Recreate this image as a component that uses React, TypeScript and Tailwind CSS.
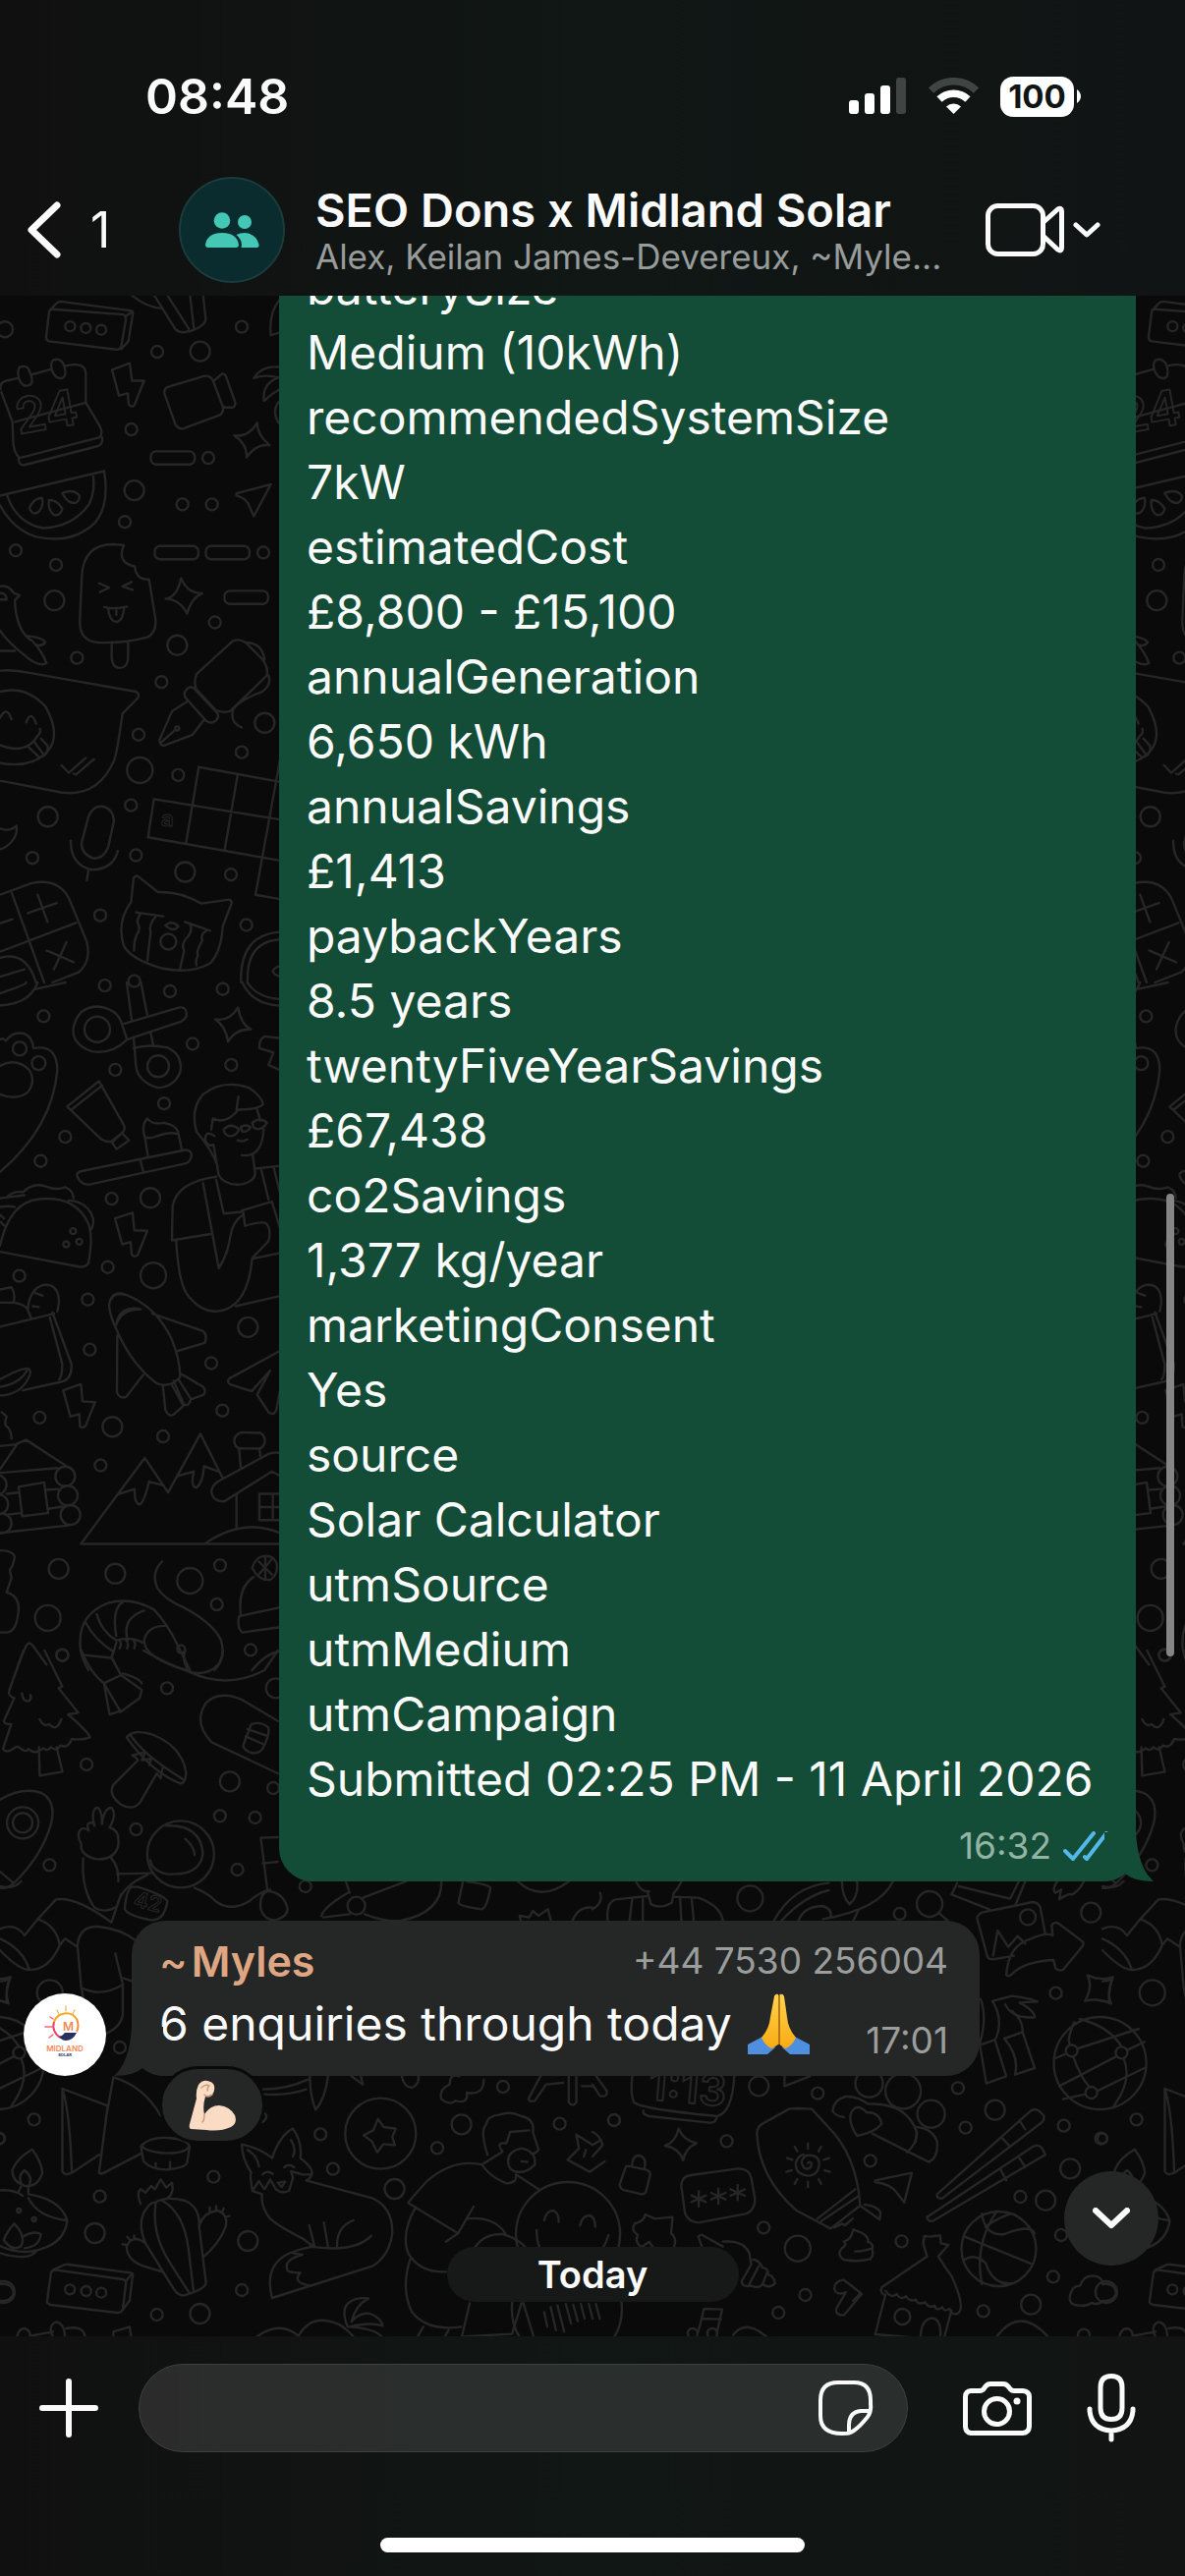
import React from 'react';

type Scene = {
  transform: string;
  sx: number;
  sy: number;
  paths: string;
  circles: number[][];
};

const submission = [
  'batterySize',
  'Medium (10kWh)',
  'recommendedSystemSize',
  '7kW',
  'estimatedCost',
  '£8,800 - £15,100',
  'annualGeneration',
  '6,650 kWh',
  'annualSavings',
  '£1,413',
  'paybackYears',
  '8.5 years',
  'twentyFiveYearSavings',
  '£67,438',
  'co2Savings',
  '1,377 kg/year',
  'marketingConsent',
  'Yes',
  'source',
  'Solar Calculator',
  'utmSource',
  'utmMedium',
  'utmCampaign',
  'Submitted 02:25 PM - 11 April 2026',
];

// Wallpaper doodles. Circles are [cx, cy, radius], radius in wallpaper units.
const scenes: Scene[] = [
  {
    // calendar, melon, popsicle, pen, cat
    transform: 'translate(0 300) scale(.33333 .44643)',
    sx: 3,
    sy: 2.24,
    paths: `M160 33L375 45Q385 46 384 58L370 118Q366 126 355 125L150 106Q140 104 141 95L150 40Q152 32 160 33M152 36L172 20Q178 15 190 16L398 36Q408 38 405 46L392 106L370 124M405 38L382 50
      M400 0Q450 30 495 31M470 0L535 78Q550 90 575 83M510 0L577 78M580 0L592 78M620 0L628 55Q628 72 577 84M855 10Q820 40 827 92L855 86
      M2 215Q-2 200 20 196L55 190M98 182L155 170M200 162Q262 152 262 180L262 246L305 300Q315 315 305 325L60 372Q40 360 40 330L38 290L4 222M46 290L262 246M312 325Q315 340 300 345L75 388Q58 390 56 374
      M60 165Q85 158 92 178Q105 200 90 206Q70 212 60 195Q50 175 60 165ZM162 149Q185 142 195 160Q205 182 193 189Q175 195 162 178Q150 158 162 149Z
      M342 171L396 156L403 196L440 196L410 252Q403 258 393 250L390 225L363 230Z
      M502 225Q500 215 510 211L620 186Q640 182 650 195L680 255Q684 268 672 274L560 305Q545 308 535 295ZM655 195L678 180Q686 180 690 186L718 245Q720 255 710 257L688 257Q682 257 678 250L655 205
      M855 165Q800 160 775 190Q810 180 855 190M855 188Q800 200 806 242Q830 225 855 215M850 245Q830 265 850 292
      M785 292Q785 320 823 343Q780 340 753 371Q755 340 715 321Q760 325 785 292Z
      M475 357H580Q595 359 595 372Q595 385 580 387H475Q460 385 460 372Q460 359 475 357ZM487 573H591Q606 575 606 588Q606 601 591 603H487Q472 601 472 588Q472 575 487 573ZM643 573H747Q762 575 762 588Q762 601 747 603H643Q628 601 628 588Q628 575 643 573ZM700 675H804Q819 677 819 690Q819 703 804 705H700Q685 703 685 690Q685 677 700 675Z
      M722 453L827 432L775 505L763 485Q755 465 722 458Z
      M0 458L318 402Q335 480 290 520Q220 570 110 552Q40 535 0 480M22 458Q50 520 130 532Q220 530 270 480Q292 450 284 408M90 487Q100 465 128 463Q135 480 118 495Q100 505 90 487ZM150 468Q145 490 165 502Q185 505 190 488Q175 468 150 468ZM190 452Q205 475 228 475Q245 470 242 458Q225 442 190 452Z
      M250 640Q255 570 345 569L378 571Q355 610 412 620Q415 650 455 649L475 740Q478 770 450 781Q380 795 300 793Q240 790 244 740ZM341 793V830Q345 851 366 851Q388 850 391 830V790M303 658L333 668L305 678M402 655L374 665L405 673M318 712Q350 718 388 711M330 715Q335 745 355 746Q375 745 379 714M355 718V730
      M553 646Q570 680 617 681Q585 690 571 727Q550 695 506 693Q540 690 553 646Z
      M0 665Q25 660 42 680L60 685L45 697Q50 770 100 790Q130 815 142 840Q120 850 80 825Q20 790 0 765M0 680Q20 680 20 695L0 695M85 778Q125 780 138 792Q130 803 108 798M0 812H45
      M0 857Q40 854 90 862L415 905Q428 910 420 920L374 955Q355 1055 348 1062Q300 1145 190 1135L0 1108M0 905Q80 890 140 940Q190 1010 140 1045Q90 1080 0 1068M0 965Q20 935 35 968M80 975Q95 945 110 978M0 1027Q80 1050 115 1005Q125 1000 122 990M88 1032L120 1055Q150 1050 145 1028L125 1012M105 1020L130 1045M188 1073L210 1090L262 1056M225 1092L232 1094L287 1059
      M600 865L710 790Q730 783 750 793L800 830Q820 850 815 868L705 948Q690 955 660 948L600 900Q590 885 600 865ZM755 793Q800 795 808 832M820 868Q830 890 800 905Q730 925 712 945Q700 975 738 987M565 905Q575 890 592 897L665 955Q670 968 650 975Q635 977 625 968L568 920Q560 912 565 905ZM573 927L525 950L487 1015Q488 1030 505 1027L588 1003L622 970M490 1022L535 992
      M607 1077L850 1110M470 1150L850 1196M452 1237L855 1290M607 1077L568 1250M725 1097L686 1265M855 1060L780 1368L855 1378M470 1150L452 1237
      M270 1190Q285 1163 315 1167Q345 1172 348 1200L330 1260Q315 1287 285 1285Q248 1275 249 1250ZM216 1245Q215 1300 280 1311Q345 1310 360 1268M270 1312L265 1335M0 1217Q30 1225 50 1211Q55 1230 35 1247Q15 1263 0 1264
      M0 1368L95 1342Q175 1328 210 1375L265 1475Q280 1520 240 1545L160 1568M36 1364L135 1568M0 1498L232 1432M0 1433L38 1424M85 1410L173 1387M115 1368L145 1430M142 1495L225 1522M203 1476L165 1538M0 1512Q80 1495 110 1568M0 1555L75 1538
      M408 1330Q415 1322 425 1328L482 1362Q550 1360 615 1388L700 1379Q710 1382 706 1390L680 1440Q675 1500 640 1525Q580 1550 490 1535Q400 1515 378 1485Q355 1430 400 1385ZM415 1408L498 1417M565 1430L642 1450M430 1410q-15 15-8 25q8 12-5 25q-8 15-8 35M475 1418q-22 20-15 35q-5 30-10 65M580 1435q10 15-8 30q-20 15-10 30q-5 20-12 40M630 1450q-20 10-12 22q-20 25-14 35q-8 10-4 22M505 1438Q525 1425 545 1440Q530 1455 505 1438
      M855 1453Q730 1460 736 1568M855 1470Q750 1475 756 1568M855 1530q-20 5-22 12q5 10 22 12`,
    circles: [
      [15, 79, 8], [214, 72, 5], [262, 76, 5], [309, 80, 5], [738, 73, 6], [480, 130, 6], [611, 129, 10], [401, 307, 6],
      [636, 372, 6], [410, 446, 10], [557, 478, 6], [647, 478, 6], [381, 518, 6], [48, 583, 6], [171, 616, 6], [804, 588, 6],
      [166, 697, 10], [656, 747, 6], [541, 799, 10], [235, 828, 6], [493, 883, 6], [423, 1003, 6], [427, 1084, 13], [544, 1095, 6],
      [808, 976, 10], [738, 1043, 6], [400, 1164, 6], [146, 1190, 10], [99, 1284, 6], [415, 1278, 6], [565, 1316, 10],
      [705, 1322, 6], [306, 1415, 6], [752, 1437, 6], [514, 1475, 8], [410, 1565, 6], [541, 989, 2],
    ],
  },
  {
    // scissors, person, rocket, mountains, shrimp
    transform: 'translate(0 1000) scale(.33333 .44643)',
    sx: 3,
    sy: 2.24,
    paths: `M0 25Q80 5 80 0M0 52Q90 50 115 0M110 15L200 0
      M388 130Q340 165 280 157Q215 140 225 100Q240 55 300 55Q355 60 370 90ZM375 95L548 57Q570 55 570 75Q565 85 550 90L388 130M387 0L402 85M430 0L450 75M408 150Q450 140 510 148Q560 165 550 205Q530 240 480 240Q420 225 415 190L408 125M460 115L468 143
      M740 0Q770 50 855 53M755 0Q785 35 855 38M727 57Q735 95 766 107Q720 105 696 135Q690 100 657 84Q700 90 727 57ZM855 127L808 123Q790 130 792 150L835 160L820 188L855 200
      M0 130Q10 125 18 133Q40 110 75 117Q100 125 102 150Q175 140 175 200Q160 330 0 432M0 190Q50 170 90 200Q110 225 85 250Q50 270 0 255
      M205 283L302 225L378 325Q385 335 370 345L340 362Q325 365 310 358ZM218 290L312 235M342 365L372 343L394 360L356 380Z
      M235 440Q235 432 250 430L565 382Q590 383 583 400Q578 410 565 413L270 461Q245 462 235 440ZM428 405L438 432M452 398L443 355Q430 325 450 310Q465 325 500 320Q540 325 545 345L555 380M443 352Q455 358 480 350Q520 340 540 345
      M0 600Q30 500 120 494Q230 485 270 550Q285 580 270 640Q260 650 240 648L0 614M20 490Q40 475 70 478Q100 455 140 465Q170 475 200 467Q225 475 224 492M210 497Q270 500 285 540Q285 560 275 565M0 492L75 485M0 512Q30 508 45 512M0 530l12 8m-10 8l10 8
      M351 538L405 525L410 565L450 566L420 622Q410 628 402 620L399 592L373 597Z
      M665 420Q650 385 600 340Q580 290 620 255Q680 220 760 240Q800 260 803 278Q790 290 728 290Q690 325 650 310L645 335M728 260L722 290M655 350Q625 335 627 360Q635 375 652 370L668 440Q690 465 740 460Q785 450 778 430L772 395M785 290L795 315M738 394Q800 400 805 335M683 335Q705 318 730 335Q720 352 700 350Q685 348 683 335ZM735 330Q750 322 765 330Q755 342 740 340ZM770 320Q795 305 815 320Q800 340 775 332ZM725 360Q740 365 755 358
      M660 443Q540 455 527 510L525 588L648 573M620 458L668 652Q695 620 703 580Q710 545 742 530M660 450L683 527L738 523M538 590Q545 680 570 710Q610 750 660 750Q755 745 770 630L855 617M775 425L855 418M798 428L820 495M835 420L855 480M738 520L830 500L855 560M742 520L748 555Q790 545 810 548Q830 560 820 590L770 628M720 738L855 715
      M333 735Q340 700 385 712Q480 740 525 815Q550 860 550 900Q520 925 480 915Q400 870 355 790Q335 760 333 735ZM355 780Q365 735 430 745Q375 745 358 775M340 722Q350 705 380 712M465 755L620 795Q635 805 625 822L543 840M358 805L357 935Q365 950 385 945L437 895M497 918L505 975Q515 992 530 985L560 965L523 915M530 908L560 960Q575 970 583 950L545 905M555 893L620 922Q630 930 622 940L585 950
      M0 785L165 755M160 752L218 870Q220 905 190 910L70 930M150 757L190 870Q190 900 180 905M85 745Q90 700 130 690Q180 685 180 730L175 750M82 742L95 765M108 708L130 714M100 738L118 740M0 700L35 695Q50 715 40 730L0 730M40 730Q70 732 85 745M0 905Q60 880 85 880Q100 885 85 905Q60 940 0 942M0 922Q60 915 82 885
      M193 930L247 916L252 955L290 957L262 1010Q252 1018 244 1012L242 984L215 990Z
      M855 840L700 903Q690 912 705 917L768 932L825 885L785 940L820 980Q840 990 845 970L855 930
      M5 980Q15 985 20 990Q10 1010 25 1015Q35 1025 35 1040M0 1057L52 1053L0 1110M50 1052L80 1043L205 1104M0 1118L175 1107M0 1255L210 1238M20 1166L55 1163M25 1213L65 1210M140 1157L178 1155M148 1200L190 1195M57 1150L135 1140L147 1210L68 1217Z
      M247 1280L442 1084L513 1163L612 1029L680 1130M247 1280H855M360 1167L411 1155Q410 1190 427 1190Q440 1185 455 1138L500 1147M543 1125L592 1115Q580 1150 600 1152Q620 1140 623 1103L668 1115M645 1160Q650 1145 665 1138L820 1075Q840 1070 855 1073M645 1160Q650 1185 685 1183L830 1115L855 1125M722 1165V1245M625 1280Q740 1220 855 1255M735 1105L730 1063Q712 1055 716 1040Q725 1025 745 1026L795 1027Q812 1035 808 1050Q800 1065 785 1063L732 1062M793 1065L795 1080M855 1166H792V1226H855M833 1168V1226M792 1196H855
      M0 1295Q40 1295 45 1310L38 1330l-8 10l5 18L20 1390Q65 1400 55 1440Q50 1480 20 1482H0
      M270 1568Q240 1530 245 1500Q245 1440 330 1415Q400 1400 470 1430Q510 1460 545 1515L580 1568M262 1460Q290 1500 345 1525M295 1440Q310 1480 355 1500M355 1490Q340 1430 375 1412M390 1500Q370 1450 440 1432M440 1500Q450 1465 510 1467M440 1500Q440 1540 570 1568M250 1533L340 1540Q350 1520 355 1505M340 1540L362 1568M365 1500q8 8 0 18M385 1500q10 8 3 18M405 1498q12 8 5 20M355 1500Q400 1490 435 1505
      M495 1320Q460 1345 480 1380Q500 1405 560 1425Q650 1460 675 1500Q690 1540 655 1568
      M775 1355Q725 1380 735 1440M855 1425L730 1445Q722 1470 740 1482L855 1470M770 1335Q780 1310 805 1308Q835 1305 845 1325Q850 1350 825 1362Q790 1365 770 1335ZM790 1320L830 1350M830 1315L790 1350M810 1308V1360
      M56 1555L78 1515Q88 1500 100 1512L142 1555M770 1568Q810 1530 855 1525`,
    circles: [
      [320, 7, 6], [519, 20, 6], [680, 15, 6], [133, 77, 6], [588, 140, 6], [352, 199, 6], [706, 188, 6], [501, 276, 6],
      [199, 352, 6], [124, 407, 6], [341, 493, 6], [459, 491, 10], [329, 649, 6], [468, 668, 13], [59, 669, 6], [268, 723, 6],
      [274, 837, 6], [757, 786, 10], [645, 868, 6], [121, 992, 6], [343, 1013, 10], [498, 1035, 6], [679, 976, 6], [307, 1101, 6],
      [179, 1337, 10], [352, 1348, 10], [580, 1364, 13], [672, 1329, 6], [146, 1449, 13], [662, 1418, 6], [190, 1533, 6],
      [765, 1522, 6], [60, 151, 7], [118, 184, 7], [483, 191, 11], [297, 107, 13], [223, 567, 3], [202, 597, 3], [242, 591, 3],
      [199, 1126, 10], [207, 1170, 10], [215, 1214, 10], [-10, 1145, 10], [-5, 1190, 10], [5, 1233, 10], [553, 1520, 4],
    ],
  },
  {
    // tree, mushroom, astronaut
    transform: 'translate(0 1680) scale(.38462 .33333)',
    sx: 2.6,
    sy: 3,
    paths: `M62 0L25 120Q20 140 38 145L10 215Q10 225 30 225L8 300Q15 315 35 300Q45 290 50 295Q70 315 75 300Q90 320 115 298Q125 310 135 295Q150 310 160 290Q180 300 190 270Q215 275 238 265Q235 250 180 195L207 190L155 115L165 110L118 0M103 295L105 382L165 370L150 295M58 130Q60 155 75 155Q85 150 80 135M105 210Q115 235 130 225Q150 250 162 210
      M215 0Q240 70 275 100L290 195L318 185L275 100L320 75L375 120L370 145L318 188M320 75L295 20M325 70Q370 85 375 100M380 0Q440 40 500 65Q480 30 490 0M500 65Q600 120 700 60L735 0M500 65Q550 80 580 40Q590 20 590 0
      M735 215L640 150Q580 120 545 160Q510 220 560 280L735 375M665 225Q690 215 710 235Q715 255 695 300Q680 320 660 310Q640 300 645 285ZM655 240L705 260M650 262L695 285
      M335 265Q350 240 400 255Q480 290 492 370Q492 410 475 405Q400 370 335 265ZM345 258Q380 320 487 395M350 320Q360 325 365 335L300 410Q285 440 320 470Q350 490 370 465L410 385L415 375L425 390L430 360M350 320L385 310L375 335L400 330L395 350
      M0 455Q60 415 110 435Q150 460 135 530Q110 630 35 712Q20 728 0 725M0 675L35 710
      M215 590Q200 560 215 545Q225 540 235 550Q225 525 245 525L250 535Q240 490 255 480Q270 480 270 530Q275 480 295 480Q310 500 290 540Q320 550 312 600Q300 640 255 637Q210 625 215 590M220 635Q215 730 250 785Q280 805 310 780Q320 720 390 685M293 632Q315 660 313 705M310 682L400 680M515 725Q550 740 570 765Q610 800 660 765Q690 735 715 730M440 535Q530 530 537 620Q530 690 440 682Q400 670 398 640M490 575Q515 600 515 625
      M350 722Q335 725 330 790Q340 810 400 823Q435 825 443 765Q430 745 365 722ZM735 570L690 572L708 735Q685 745 690 790Q700 825 730 823Q765 810 760 785Q750 740 710 735M695 650L735 645
      M100 820L148 760Q200 750 295 830L320 745M0 850Q40 830 65 870L100 820Q150 840 158 900L172 880L205 905M0 880Q60 910 78 975M158 900Q130 975 78 975Q50 975 0 915
      M205 900Q210 840 260 843Q320 850 358 885M205 900L215 1030Q270 1060 325 1020Q310 950 305 925M325 1000L350 1010M215 1030L225 1085M325 1020V1110Q320 1150 280 1170M0 1010Q15 1010 27 1000Q15 1040 18 1075Q10 1070 0 1070
      M915 705L925 740M850 810Q860 780 920 740M855 815L925 805M960 755L1075 705M965 805Q1020 830 1060 825Q1170 800 1168 705M1225 705L1213 770Q1215 780 1275 790Q1288 785 1298 725Q1295 715 1235 705M1370 705Q1430 770 1505 705M1378 825L1375 810L1400 815L1410 795L1425 810L1450 790L1458 825M1515 825Q1530 780 1568 785
      M695 1340Q760 1340 815 1310M695 1355Q760 1360 810 1340M820 1300Q820 1360 835 1402Q860 1370 868 1300M930 1300L960 1325L955 1300M1063 1300Q1070 1335 1090 1335Q1110 1325 1107 1300M1215 1300Q1190 1290 1190 1325Q1160 1340 1168 1370Q1190 1390 1205 1375Q1240 1385 1235 1350Q1280 1360 1280 1310M1430 1300L1400 1365Q1395 1380 1415 1375L1445 1325L1490 1320M1505 1300V1380Q1515 1395 1525 1380V1300M1540 1330H1568M695 1410Q715 1420 695 1440`,
    circles: [
      [165, 15, 6], [442, 115, 6], [229, 348, 6], [608, 400, 10], [723, 420, 6], [582, 505, 6], [675, 510, 6], [360, 546, 6],
      [131, 655, 6], [628, 669, 6], [317, 1212, 6], [808, 720, 6], [943, 779, 9], [730, 115, 10], [1331, 1332, 6],
      [60, 526, 16], [60, 526, 10], [478, 622, 34], [132, 1045, 13],
    ],
  },
  {
    // lamp, book, cactus, fox, hugging man
    transform: 'translate(0 2150) scale(.38462 .33333)',
    sx: 2.6,
    sy: 3,
    paths: `M1000 20L1015 45Q1045 50 1047 50L1038 75L1045 100L1015 97L998 122L985 90L962 70L988 55Z
      M85 113Q110 150 112 185Q100 230 65 225Q30 210 33 175Q45 140 85 113ZM65 177Q90 200 75 225M65 177Q45 195 58 220M55 228L48 245M0 238Q40 235 60 255M75 228V250Q160 265 178 330Q170 410 80 425Q40 430 0 408M75 262Q100 320 175 330M0 430Q60 450 85 435L100 420M38 340Q70 380 55 410Q30 425 10 390Q20 360 38 340ZM60 380Q90 360 108 372Q105 410 65 415
      M165 -72L285 -20L262 185Q265 190 275 185L375 125M165 -72V180Q170 195 190 185L262 130M165 -72Q185 0 190 185M300 -107L280 20M300 -107Q380 -80 425 10
      M375 100Q400 75 440 78Q490 80 500 100Q500 125 440 125Q380 120 375 100ZM373 105L380 150Q400 175 440 175Q490 170 495 155L502 105M412 155V170M450 152V170
      M372 280Q360 245 372 235L385 245L400 225L410 235L425 205L440 230L455 215Q462 250 440 265M410 275Q440 255 490 270Q530 290 527 350L545 520Q545 540 485 560Q470 558 460 540L385 400Q360 330 390 290Q400 275 410 275ZM412 280Q400 370 450 460L500 550M430 270Q490 310 500 430L512 545M527 345Q540 305 575 300Q605 310 597 350Q580 400 540 440M385 400Q350 370 335 410Q335 450 380 470L430 487M555 302v-12M572 298v-12M587 305l5-12M595 320l12-3M338 405l-14-2M345 392l-8-12M355 388v-12
      M640 98Q690 110 720 140Q740 70 775 50Q800 90 795 140Q830 170 825 190Q820 205 810 208L985 262Q1040 290 1038 370Q1030 440 985 470L720 567Q700 480 750 440Q780 420 830 410L800 385Q740 350 715 325Q690 290 693 250L668 240Q660 190 665 185Q640 140 640 98ZM655 115Q680 130 685 165M770 85Q785 110 775 135M695 190Q705 175 722 188M752 168Q765 155 778 168M668 240L685 210L700 235L715 205L730 235Q745 250 765 240L775 200L770 180L800 190L820 190M735 215L755 212L745 228ZM818 345L832 408M857 337L868 410M935 330Q890 350 892 410M820 410Q940 430 982 377M775 430L800 435Q750 450 760 480Q760 490 795 490Q770 520 825 530
      M135 490Q138 480 150 482L325 510Q335 512 333 525L325 600Q322 613 310 612L135 588Q122 585 125 573ZM140 482L162 470Q170 463 182 465L345 490Q353 492 351 500L343 575L320 610M350 492L333 515
      M1275 160Q1200 140 1130 210Q1090 260 1080 277L1212 370L1253 288M1100 290Q1060 370 1080 430Q1110 490 1180 487M1085 450Q1060 540 1090 610Q1130 670 1220 655M1275 160Q1300 200 1340 217Q1370 215 1365 190L1425 235M1290 130Q1270 60 1285 40Q1290 10 1320 8Q1350 -5 1380 12Q1415 20 1410 60L1425 115Q1415 130 1405 125M1275 160L1330 120Q1310 90 1340 95L1350 60L1400 55M1345 155Q1340 120 1380 110Q1420 120 1415 160Q1390 190 1360 180Q1345 170 1345 155ZM1380 150L1395 152M1212 370L1180 395M1235 325Q1310 315 1340 375M1255 415Q1280 370 1330 372Q1370 385 1390 412
      M1440 330Q1445 300 1465 300Q1480 310 1478 335M1535 345Q1540 315 1560 315Q1575 320 1575 350M1420 360Q1420 460 1503 480Q1590 460 1610 375M1243 583L1222 685L1355 677L1380 583M1385 583L1412 685M1120 655L1105 685M1187 665L1177 685M1440 610l8 45M1457 595l14 70M1475 590l18 80M1497 585l14 60M1517 588l12 50M1537 585l10 45M1558 585l10 45M1577 585l10 45
      M920 655Q900 600 925 580Q940 565 975 568Q940 590 930 640Q950 610 980 615Q1010 630 1013 652Q980 640 925 655M925 655Q990 660 1010 685M680 685Q740 635 790 683Q820 620 880 640Q910 650 935 685
      M45 685Q50 660 65 660Q80 665 80 683L140 670M140 685Q125 650 150 640Q170 645 172 685M175 660Q220 650 225 685M300 685V670L343 655L347 685M1600 150L1560 182L1502 145L1532 110L1525 68L1568 100L1590 85M1550 115L1545 135`,
    circles: [
      [90, 22, 6], [848, 67, 6], [1221, 37, 10], [1481, 35, 6], [1157, 109, 6], [881, 173, 6], [1044, 234, 10], [565, 197, 6],
      [264, 257, 6], [251, 369, 10], [656, 393, 10], [640, 543, 6], [415, 618, 6], [529, 615, 10], [10, 549, 11], [185, 541, 5],
      [228, 546, 5], [268, 551, 5], [50, 300, 2], [90, 327, 2], [0, 80, 5], [1007, 65, 36], [1503, 372, 53], [1500, 600, 56],
    ],
  },
  {
    // portrait, picture, arrow, globe
    transform: 'translate(603 1780) scale(.38462 .33333)',
    sx: 2.6,
    sy: 3,
    paths: `M115 405Q130 440 150 435M235 405Q225 430 215 440L210 470Q180 490 155 475L145 435M40 525Q35 470 60 460L145 450M215 452L280 455Q340 480 345 525M105 458L98 525M133 458V525M232 455L235 525M262 455L268 525M0 490Q30 470 20 440M480 525Q530 420 625 410M500 525Q560 450 625 432M545 525Q560 480 610 480Q635 490 630 515M660 405Q660 450 680 475Q705 450 700 405M795 405Q760 490 610 520M705 490L690 525
      M915 500L940 525M965 410L950 445L1050 490M970 420L1105 458L1128 405M1145 405L1120 475M1230 405Q1215 430 1225 440L1240 430L1235 460Q1260 440 1270 445Q1290 430 1300 405M1350 420Q1385 430 1405 405
      M1198 565L1185 485Q1180 470 1165 468L1030 500Q1015 510 1018 520L1045 635Q1050 645 1065 642L1115 632M1060 632L1072 555L1100 605L1125 572L1145 595
      M1095 690Q1100 600 1160 580Q1200 560 1218 570L1215 540Q1220 525 1235 535L1298 590Q1300 600 1295 605L1245 675Q1235 680 1225 670L1220 645Q1140 650 1108 690Q1098 698 1095 690
      M1310 692Q1345 710 1377 697Q1360 740 1372 778Q1335 760 1303 770Q1325 730 1310 692Z
      M1027 765Q1045 820 1025 900M1060 770L1110 755Q1150 760 1177 772L1130 775Q1170 800 1170 820Q1110 825 1092 780M1058 770Q1090 830 1065 890L1095 1000L1042 1022L1025 905L1062 890M1110 800Q1140 830 1138 865L1090 885Q1130 940 1118 995L1170 975L1138 865
      M1275 835Q1250 900 1268 905M1272 940Q1290 1000 1315 1033M1400 910Q1370 850 1290 825M1405 945Q1430 1010 1380 1090M1225 945L1252 932M1285 915L1445 855M1235 1030L1385 940M1415 920L1460 895M1245 1070L1305 1055M1335 1045L1460 975
      M105 1000Q100 1060 110 1080Q130 1100 330 1122Q370 1110 375 1000M135 1105Q130 1115 150 1122L310 1142Q325 1143 328 1128M508 1000V1030L575 1000M0 1025L20 1060Q40 1065 38 1045L10 1000
      M635 1105Q640 1070 670 1062Q700 1060 730 1085Q830 1080 858 1170L855 1200M635 1105Q640 1120 665 1125M700 1182Q675 1140 685 1110Q700 1080 725 1110Q760 1110 765 1145Q750 1170 700 1182`,
    circles: [
      [417, 457, 13], [813, 504, 6], [892, 474, 13], [1319, 500, 10], [1226, 746, 6], [440, 1030, 10], [596, 1052, 6],
      [967, 1036, 6], [732, 1022, 14], [822, 1045, 18], [896, 1115, 14], [1065, 1103, 10], [987, 1157, 6], [1247, 1151, 6],
      [57, 1134, 6], [1152, 514, 8], [1343, 960, 47], [1268, 922, 6], [1400, 928, 6], [1320, 1050, 6],
    ],
  },
  {
    // padlock, bottle, chopsticks, basketball, hut
    transform: 'translate(603 2150) scale(.38462 .33333)',
    sx: 2.6,
    sy: 3,
    paths: `M228 50Q240 85 275 95Q245 110 240 147Q230 110 192 102Q220 90 228 50ZM88 167L72 220Q72 235 85 238L130 250Q140 250 142 240L153 190Q152 178 140 175L100 165Q90 163 88 167ZM105 165Q105 130 125 132Q145 140 137 172
      M235 225Q235 195 260 192L385 172Q415 172 420 200L430 265Q430 300 405 310L280 337Q255 335 245 310ZM281 241v46M262 254l38 20M262 274l38-20M333 233v46M314 246l38 20M314 266l38-20M384 222v46M365 235l38 20M365 255l38-20
      M112 340Q135 335 140 312L165 325L212 320L208 370Q225 385 215 412M112 340Q100 360 120 375Q110 395 130 412L150 395L160 412M0 60Q20 70 27 100L0 135
      M520 -10L450 35Q435 45 435 65Q440 200 540 300L630 355L708 285Q700 130 620 40L580 -10L540 -12ZM595 325L695 235M605 332L705 255M640 352L660 340L668 345L688 325M708 285L760 328L762 305Q750 285 720 282
      M570 155q8-8 10 5q-5 18-20 10q-15-20 5-38q30-5 35 20q0 40-30 42q-35-5-32-40q5-20 20-25M570 95v16M570 212v16M513 182l14-5M628 182l-14-5M515 140l14 5M626 140l-14 5M535 105l7 14M605 105l-7 14M535 218l7-14M605 218l-7-14
      M740 65L890 152Q915 140 912 90Q900 50 858 45M858 60Q860 95 832 122M748 208L845 185L825 275L805 245Q790 220 748 213Z
      M912 250L1160 -5Q1175 -15 1190 5Q1200 15 1190 30L925 263Q910 265 912 250M1085 80L1105 105M1130 25L1145 52M885 320L1165 105Q1180 95 1190 110L1198 130L900 332Q888 335 885 320M1080 175L1095 208M1130 140L1145 168
      M690 358Q685 390 665 395Q675 405 660 415Q645 435 665 450Q700 458 735 448Q745 435 740 420Q745 400 728 395Q735 375 690 358M695 425Q715 425 740 415
      M290 412L280 380Q285 370 295 378L345 410M345 395Q400 390 415 430L420 465L395 515Q395 535 420 530Q440 540 450 525Q470 540 483 522Q480 500 465 495Q465 475 450 475Q440 450 425 450M440 470L415 525M462 490L450 525
      M985 380L1162 463M1070 302Q1010 400 1030 525M1030 310Q1040 380 1090 372Q1160 340 1170 370M985 450Q1010 430 1040 460Q1060 530 1110 522M1040 350Q1060 330 1105 310
      M775 558Q760 555 765 535L885 440L875 400L878 378L893 380L905 378L920 376L922 400L942 405L915 440Q930 470 950 500Q990 600 965 615Q950 620 945 600Q930 610 925 595Q910 610 905 590Q890 600 880 580Q860 590 855 572Q840 580 830 562Q815 575 805 555Q790 570 775 545M775 558L748 678L870 690M950 605L930 690M868 685Q870 630 900 628Q925 635 920 690
      M1290 590Q1255 590 1265 555Q1270 530 1290 530Q1300 495 1330 500Q1350 505 1350 525Q1385 520 1385 555Q1375 580 1350 575Q1340 590 1320 582Q1310 592 1290 590
      M640 540Q640 515 665 512L710 552L690 575M640 540Q645 560 670 550L645 600Q642 620 665 620L712 555M280 670L295 600L343 602L330 670M290 630L340 632M1070 685Q1130 590 1205 685M372 680Q400 640 440 668L460 685`,
    circles: [
      [57, 24, 6], [355, 88, 6], [453, 352, 6], [543, 416, 13], [735, 148, 6], [818, 394, 6], [563, 558, 6], [492, 612, 6],
      [1132, 258, 6], [1199, 269, 10], [1264, 172, 10], [1240, 375, 6], [1219, 502, 6], [1160, 587, 10], [1034, 607, 6],
      [1346, 80, 6], [1300, 680, 6], [820, 624, 8], [1075, 417, 38], [265, 675, 5], [317, 675, 5],
    ],
  },
];

function Wallpaper() {
  return (
    <svg
      className="absolute inset-0 h-full w-full"
      viewBox="0 301 1206 2077"
      preserveAspectRatio="xMinYMin slice"
      fill="none"
      stroke="#262626"
      strokeWidth="2.4"
      strokeLinecap="round"
      strokeLinejoin="round"
      aria-hidden="true"
    >
      <g id="doodles">
        {scenes.map((scene) => (
          <g key={scene.transform} transform={scene.transform}>
            <path d={scene.paths} vectorEffect="non-scaling-stroke" />
            {scene.circles.map(([cx, cy, r]) => (
              <ellipse key={`${cx}-${cy}-${r}`} cx={cx} cy={cy} rx={r * scene.sx} ry={r * scene.sy} vectorEffect="non-scaling-stroke" />
            ))}
          </g>
        ))}
        <g fontFamily="Inter, sans-serif" fontWeight="600" strokeWidth="2">
          <text x="19" y="442" fontSize="50" transform="rotate(-10 19 442)">24</text>
          <text x="164" y="841" fontSize="22" strokeWidth="1">a</text>
          <text x="135" y="1940" fontSize="22" strokeWidth="1" transform="rotate(14 135 1940)">42</text>
          <text x="659" y="2137" fontSize="44" transform="rotate(5 659 2137)">1:13</text>
        </g>
      </g>
      {/* the pattern repeats every 1122 units */}
      <use href="#doodles" x="1122" />
      <use href="#doodles" x="-1122" />
    </svg>
  );
}

function StatusIcons() {
  return (
    <div className="flex items-center gap-[22px]">
      <svg className="h-[38px] w-[59px]" viewBox="0 0 59 38" fill="#fff" aria-hidden="true">
        <rect x="0" y="23" width="10" height="14" rx="3" />
        <rect x="16" y="16" width="10" height="21" rx="3" />
        <rect x="32" y="8" width="10" height="29" rx="3" />
        <rect x="48" y="0" width="10" height="37" rx="3" fill="#404544" />
      </svg>
      <svg className="h-[38px] w-[51px]" viewBox="0 0 51 38" aria-hidden="true">
        <path d="M2.5 13A33 33 0 0 1 48.500 13" fill="none" stroke="#404544" strokeWidth="7.500" />
        <path d="M11 22A21 21 0 0 1 40 22" fill="none" stroke="#fff" strokeWidth="7.500" />
        <path d="M18 29.500A11 11 0 0 1 33 29.500L25.500 37Z" fill="#fff" />
      </svg>
      <div className="flex items-center gap-[3px]">
        <div className="flex h-[41px] w-[75px] items-center justify-center rounded-[13px] bg-white text-[33px] leading-none font-bold text-[#101514]">
          100
        </div>
        <svg className="h-[14px] w-1" viewBox="0 0 4 14" fill="#fff" aria-hidden="true">
          <path d="M0 0Q4 3 4 7T0 14Z" />
        </svg>
      </div>
    </div>
  );
}

function ChatHeader() {
  return (
    <header className="relative shrink-0 bg-linear-to-r from-[#101010] via-[#101715] to-[#111414] pb-[13px]">
      <div className="flex h-[138px] items-end justify-between pr-[106px] pl-[148px]">
        <time className="text-[50px] leading-[80px] font-semibold">08:48</time>
        <div className="flex h-[80px] items-center">
          <StatusIcons />
        </div>
      </div>
      <div className="mt-[42px] flex items-center pr-[86px] pl-7">
        <button type="button" aria-label="Back" className="flex w-[154px] items-center gap-[30px]">
          <svg className="h-[58px] w-[34px]" viewBox="0 0 34 58" fill="none" stroke="#fafafa" strokeWidth="7" strokeLinecap="round" strokeLinejoin="round">
            <path d="M30 4L4 29L30 54" />
          </svg>
          <span className="text-[50px] leading-[60px]">1</span>
        </button>
        <span className="flex h-27 w-27 shrink-0 items-center justify-center rounded-full border-2 border-[#1c3b3b] bg-[#0a2c2e]">
          <svg className="h-9 w-[55px]" viewBox="0 0 55 36" fill="#44c8b5" aria-hidden="true">
            <circle cx="17" cy="8.500" r="8.300" />
            <circle cx="40" cy="10" r="7" />
            <path d="M0 33Q2 21 17 21T34 33Q34 36 31 36H3Q0 36 0 33Z" />
            <path d="M31.500 23Q35 21 40 21Q52 22 54.500 33Q55 36 51 36H36.500Q38.500 29 31.500 23Z" />
          </svg>
        </span>
        <div className="min-w-0 flex-1 pt-1 pl-[31px]">
          <h1 className="text-[47px] leading-[50px] font-semibold whitespace-nowrap">SEO Dons x Midland Solar</h1>
          <p className="text-[35px] leading-[44px] whitespace-nowrap text-[#989c9b]">Alex, Keilan James-Devereux, ~Myle...</p>
        </div>
        <button type="button" aria-label="Video call" className="flex items-center gap-[9px]">
          <svg className="h-[54px] w-[80px]" viewBox="0 0 80 54" fill="none" stroke="#fafafa" strokeWidth="5" strokeLinejoin="round">
            <rect x="2.500" y="2.500" width="56" height="49" rx="10" />
            <path d="M58.500 19.500L73.500 6Q77.500 4 77.500 8V45Q77.500 49.500 73.500 47L58.500 33" />
          </svg>
          <svg className="h-4 w-[28px]" viewBox="0 0 28 16" fill="none" stroke="#fafafa" strokeWidth="5" strokeLinecap="round" strokeLinejoin="round">
            <path d="M3 3L14 13L25 3" />
          </svg>
        </button>
      </div>
    </header>
  );
}

function PrayEmoji() {
  return (
    <svg className="h-[63px] w-[63px]" viewBox="0 0 63 63" role="img" aria-label="Folded hands">
      <defs>
        <linearGradient id="hand" x1="0" y1="0" x2="0" y2="1">
          <stop offset="0" stopColor="#ffd34d" />
          <stop offset="1" stopColor="#f9ab14" />
        </linearGradient>
      </defs>
      <path d="M0 52L17 43L28 55L20 62H0Z" fill="#4f8fe0" />
      <path d="M63 52L46 43L35 55L43 62H63Z" fill="#4f8fe0" />
      <path d="M27 3Q28 0 31 1V52Q28 54 25 56Q18 54 14 45Q22 36 23 24Z" fill="url(#hand)" />
      <path d="M37 3Q36 0 32.500 1V52Q35 54 38 56Q45 54 49 45Q41 36 40 24Z" fill="url(#hand)" />
      <path d="M31.800 2V52" stroke="#c97a10" strokeWidth="1.500" />
    </svg>
  );
}

function MuscleEmoji() {
  return (
    <svg className="h-[52px] w-[49px]" viewBox="0 0 49 52" role="img" aria-label="Flexed biceps">
      <path
        d="M10 5Q14 0 19 1Q25 2 26 6Q27 12 24 15L17 17Q14 27 16 35Q22 26 31 26Q42 27 47 36Q50 44 43 48Q32 53 18 51L2 50Q0 49 1 45L8 19Q7 11 10 5Z"
        fill="#f9dcc3"
      />
      <path d="M16 35Q16 41 14 43M13 8Q17 4 21 6M24 15Q19 19 16 15M20 6L19 11" fill="none" stroke="#c99c7e" strokeWidth="1.500" strokeLinecap="round" />
    </svg>
  );
}

function MidlandAvatar() {
  return (
    <svg className="h-[84px] w-[84px] shrink-0" viewBox="0 0 84 84" role="img" aria-label="Midland Solar">
      <circle cx="42" cy="42" r="42" fill="#fff" />
      <g fill="none" strokeWidth="1.500" strokeLinecap="round">
        <path d="M43 13V18M34 17L36 21M52 17L50 21" stroke="#f6c26b" />
        <path d="M27 24L30 26M22 34H29M26 45L30 42" stroke="#ee6a70" />
      </g>
      <path d="M54 26A13 13 0 0 0 31 29" fill="none" stroke="#f7a823" strokeWidth="2" />
      <path d="M31 29A13 13 0 0 0 38 45" fill="none" stroke="#e9436a" strokeWidth="2" />
      <path d="M54 26Q57 33 54 39" fill="none" stroke="#f58a3c" strokeWidth="2" />
      <path d="M36 44Q40 43 42 40H54Q50 48 43 48Q39 48 36 44Z" fill="#26315f" />
      <text x="40" y="38" fontSize="12" fontWeight="600" fill="#f08a5a" fontFamily="Inter, sans-serif">M</text>
      <text x="42" y="59" fontSize="8" fontWeight="600" textAnchor="middle" fill="#f08a5a" fontFamily="Inter, sans-serif">MIDLAND</text>
      <text x="42" y="64" fontSize="4" fontWeight="700" textAnchor="middle" fill="#26315f" fontFamily="Inter, sans-serif">SOLAR</text>
    </svg>
  );
}

function OutgoingMessage() {
  return (
    <article className="relative mr-[50px] w-[872px] self-end rounded-[34px] bg-[#144d37] pt-3 pr-7 pb-3 pl-7">
      <div className="text-[48px] leading-[66px] whitespace-nowrap">
        {submission.map((line) => (
          <p key={line}>{line}</p>
        ))}
      </div>
      <div className="mt-[11px] flex items-center justify-end gap-3">
        <time className="text-[37px] leading-[48px] text-[#93b3a5]">16:32</time>
        <svg className="h-[31px] w-[46px]" viewBox="0 0 46 31" fill="none" stroke="#53b7e8" strokeWidth="4" strokeLinecap="round" strokeLinejoin="round" role="img" aria-label="Read">
          <path d="M2 20L10 28L31 2M22 26L24 28L44 2" />
        </svg>
      </div>
      <svg className="absolute right-[-18px] bottom-0 h-[50px] w-[50px]" viewBox="0 0 50 50" fill="#144d37" aria-hidden="true">
        <path d="M0 50Q14 49 21 42Q30 50 50 50Q34 36 32 0H0Z" />
      </svg>
    </article>
  );
}

function IncomingMessage() {
  return (
    <div className="relative mt-10">
      <div className="flex items-end gap-[26px] pl-6">
        <MidlandAvatar />
        <article className="relative w-[863px] rounded-[34px] bg-[#242726] pt-4 pr-8 pb-5 pl-7">
          <svg className="absolute bottom-0 left-[-18px] h-[50px] w-[50px]" viewBox="0 0 50 50" fill="#242726" aria-hidden="true">
            <path d="M50 50Q36 49 29 42Q20 50 0 50Q16 36 18 0H50Z" />
          </svg>
          <div className="flex h-[50px] items-center justify-between">
            <p className="flex gap-1 text-[43px] leading-[50px] font-semibold text-[#dea683]">
              <span className="font-medium">~</span>
              <span>Myles</span>
            </p>
            <span className="text-[37px] leading-[50px] text-[#9b9d9c]">+44 7530 256004</span>
          </div>
          <div className="mt-[6px] flex h-[66px] items-end">
            <p className="flex items-center gap-4 text-[48px] leading-[66px] whitespace-nowrap">
              6 enquiries through today
              <PrayEmoji />
            </p>
            <time className="ml-auto text-[37px] leading-8 text-[#9b9d9c]">17:01</time>
          </div>
        </article>
      </div>
      <button
        type="button"
        aria-label="Reactions"
        className="relative -mt-[10px] ml-[162px] flex h-[79px] w-[108px] items-center justify-center rounded-full border-3 border-[#0a0a0a] bg-[#242726]"
      >
        <MuscleEmoji />
      </button>
    </div>
  );
}

function Composer() {
  return (
    <footer className="relative shrink-0 bg-linear-to-r from-[#101010] via-[#111715] to-[#111413]">
      <div className="flex items-center pt-7 pr-[50px] pl-10">
        <button type="button" aria-label="Attach">
          <svg className="h-[60px] w-[60px]" viewBox="0 0 60 60" fill="none" stroke="#fafafa" strokeWidth="6" strokeLinecap="round">
            <path d="M30 3V57M3 30H57" />
          </svg>
        </button>
        <div className="ml-[41px] flex h-[90px] min-w-0 flex-1 items-center rounded-full border border-[#3c403f] bg-linear-to-r from-[#2b2b2b] via-[#2a2f2e] to-[#2a2e2d] pr-[34px] pl-9">
          <input type="text" aria-label="Message" className="h-full w-full min-w-0 flex-1 bg-transparent text-[48px] outline-none" />
          <button type="button" aria-label="Stickers" className="shrink-0">
            <svg className="h-[56px] w-[56px]" viewBox="0 0 56 56" fill="none" stroke="#fafafa" strokeWidth="4" strokeLinecap="round" strokeLinejoin="round">
              <path d="M31 53.500Q31 54 24 54Q2 54 2 36V20Q2 2 20 2H36Q53 2 53 20V24Q54 32 50 37Q42 47 36 51Q33 53 31 53.500V46Q31 32 43 31H52.500" />
            </svg>
          </button>
        </div>
        <div className="ml-[56px] flex shrink-0 items-center gap-[56px]">
          <button type="button" aria-label="Camera">
            <svg className="h-[55px] w-[70px]" viewBox="0 0 70 55" fill="none" stroke="#fafafa" strokeWidth="5" strokeLinejoin="round">
              <path d="M8 9.500H17Q20 9.500 21.500 7L23 5Q25 2.500 28 2.500H41Q44 2.500 46 5L48 7.500Q49.500 9.500 52 9.500H61Q67 10 67.500 15V46Q67 52 61 52.500H8Q3 52 2.500 46V15Q3 10 8 9.500Z" />
              <circle cx="34.500" cy="30.500" r="13" />
              <circle cx="55" cy="20" r="3.500" fill="#fafafa" stroke="none" />
            </svg>
          </button>
          <button type="button" aria-label="Record audio">
            <svg className="h-[70px] w-[50px]" viewBox="0 0 50 70" fill="none" stroke="#fafafa" strokeWidth="5" strokeLinecap="round">
              <path d="M25 2.500Q36 2.500 36 14V35Q36 46.500 25 46.500Q14 46.500 14 35V14Q14 2.500 25 2.500Z" />
              <path d="M3 36V38Q5 57 25 58Q45 57 47 38V36M25 58V67" />
            </svg>
          </button>
        </div>
      </div>
      <div className="mx-auto mt-[87px] mb-6 h-[15px] w-[432px] rounded-full bg-white"></div>
    </footer>
  );
}

export default function App() {
  return (
    <div className="flex h-screen flex-col bg-[#0a0a0a] font-['Inter','Liberation_Sans',sans-serif] text-[#fafafa]">
      <ChatHeader />
      <main className="relative flex min-h-0 flex-1 flex-col justify-end overflow-hidden pb-[35px]">
        <Wallpaper />
        <OutgoingMessage />
        <IncomingMessage />
        <div className="relative mt-[105px] flex h-14 w-[297px] items-center justify-center self-center rounded-full bg-[#161918] text-[38px] font-semibold">
          Today
        </div>
        {/* scroll position and jump to latest */}
        <div className="absolute top-[44%] right-[11px] h-[471px] w-2 rounded-full bg-[#858585]"></div>
        <button type="button" aria-label="Scroll to latest" className="absolute right-[27px] bottom-[72px] flex h-24 w-24 items-center justify-center rounded-full bg-[#242726]">
          <svg className="h-[22px] w-[38px]" viewBox="0 0 38 22" fill="none" stroke="#fafafa" strokeWidth="6" strokeLinecap="round" strokeLinejoin="round">
            <path d="M3 3L19 18L35 3" />
          </svg>
        </button>
      </main>
      <Composer />
    </div>
  );
}
